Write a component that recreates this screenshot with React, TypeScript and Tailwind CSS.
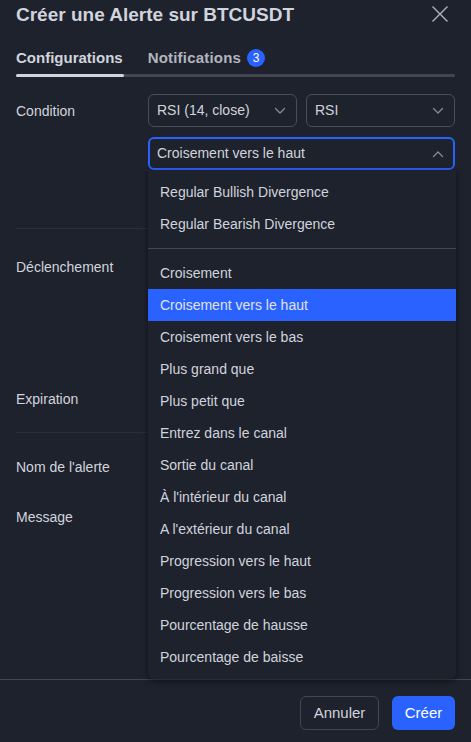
import React from 'react';

const conditions = [
  'Croisement',
  'Croisement vers le haut',
  'Croisement vers le bas',
  'Plus grand que',
  'Plus petit que',
  'Entrez dans le canal',
  'Sortie du canal',
  "À l'intérieur du canal",
  "A l'extérieur du canal",
  'Progression vers le haut',
  'Progression vers le bas',
  'Pourcentage de hausse',
  'Pourcentage de baisse',
];

function Chevron({ up = false }: { up?: boolean }) {
  return (
    <svg width="12" height="8" viewBox="0 0 12 8" className="text-[#868993]">
      <path
        d={up ? 'M1.5 6.5 6 2l4.5 4.5' : 'M1.5 1.5 6 6l4.5-4.5'}
        fill="none"
        stroke="currentColor"
        strokeWidth="1.3"
        strokeLinecap="round"
      />
    </svg>
  );
}

export default function App() {
  return (
    <div
      className="w-[471px] h-[742px] bg-[#1e222d] text-[#d1d4dc] flex flex-col overflow-hidden"
      style={{ fontFamily: '"Liberation Sans", Arial, sans-serif' }}
    >
      {/* Header */}
      <div className="h-[30px] px-4 flex items-center justify-between">
        <h1 className="text-[19px] font-semibold text-[#d1d4dc]">Créer une Alerte sur BTCUSDT</h1>
        <svg width="18" height="18" viewBox="0 0 18 18" className="text-[#b2b5be] mr-[6px] -mt-[3px]">
          <path d="M1.5 1.5l15 15M16.5 1.5l-15 15" stroke="currentColor" strokeWidth="1.4" />
        </svg>
      </div>

      {/* Tabs */}
      <div className="px-4 mt-[16px]">
        <div className="h-[24px] flex items-center gap-[25px] text-[15px] font-bold">
          <span className="text-[#d1d4dc]">Configurations</span>
          <span className="flex items-center gap-[6px] text-[#b2b5be] tracking-[0.2px]">
            Notifications
            <span className="w-[18px] h-[18px] rounded-full bg-[#2962ff] text-white text-[12px] font-normal flex items-center justify-center">
              3
            </span>
          </span>
        </div>
        <div className="mt-[4px] h-[3px] rounded-full bg-[#434651] flex">
          <div className="w-[108px] h-full rounded-full bg-[#d1d4dc]" />
        </div>
      </div>

      {/* Body */}
      <div className="flex-1 px-4 pt-[17px] text-[14px]">
        <div className="relative h-[134px]">
          <div className="flex">
            <div className="w-[132px] pt-[7px]">Condition</div>
            <div className="flex-1 flex flex-col gap-[10px]">
              <div className="flex gap-[9px]">
                <div className="flex-1 h-[33px] rounded-[6px] border border-[#4a4d58] pl-2 pr-[10px] flex items-center justify-between">
                  <span>RSI (14, close)</span>
                  <Chevron />
                </div>
                <div className="flex-1 h-[33px] rounded-[6px] border border-[#4a4d58] pl-2 pr-[10px] flex items-center justify-between">
                  <span>RSI</span>
                  <Chevron />
                </div>
              </div>
              <div className="h-[33px] rounded-[6px] border-2 border-[#2962ff] pl-[7px] pr-[9px] flex items-center justify-between">
                <span>Croisement vers le haut</span>
                <Chevron up />
              </div>
            </div>
          </div>

          {/* Dropdown list */}
          <div className="absolute left-[132px] top-[76px] w-[308px] h-[509px] z-10 bg-[#1e222d] rounded-b-[6px] shadow-[0_2px_6px_rgba(0,0,0,0.55)] py-[6px]">
            <div className="h-[32px] px-3 flex items-center">Regular Bullish Divergence</div>
            <div className="h-[32px] px-3 flex items-center">Regular Bearish Divergence</div>
            <div className="my-[8px] h-px bg-[#434651]" />
            {conditions.map((c) => (
              <div
                key={c}
                className={`h-[32px] px-3 flex items-center ${c === 'Croisement vers le haut' ? 'bg-[#2962ff] text-[#e0e3eb]' : ''}`}
              >
                {c}
              </div>
            ))}
          </div>
        </div>

        <div className="h-px bg-[#2a2e39]" />
        <div className="h-[203px] pt-[28px] flex flex-col">
          <div>Déclenchement</div>
          <div className="mt-auto mb-[22px]">Expiration</div>
        </div>
        <div className="h-px bg-[#2a2e39]" />
        <div className="pt-[24px]">Nom de l'alerte</div>
        <div className="pt-[29px]">Message</div>
      </div>

      {/* Footer */}
      <div className="h-[63px] border-t border-[#434651] px-4 pt-4 flex justify-end gap-[13px]">
        <button className="h-[34px] w-[79px] rounded-[6px] border border-[#434651] text-[15px] text-[#d1d4dc]">
          Annuler
        </button>
        <button className="h-[34px] w-[63px] rounded-[6px] bg-[#2962ff] text-[15px] text-white">Créer</button>
      </div>
    </div>
  );
}
